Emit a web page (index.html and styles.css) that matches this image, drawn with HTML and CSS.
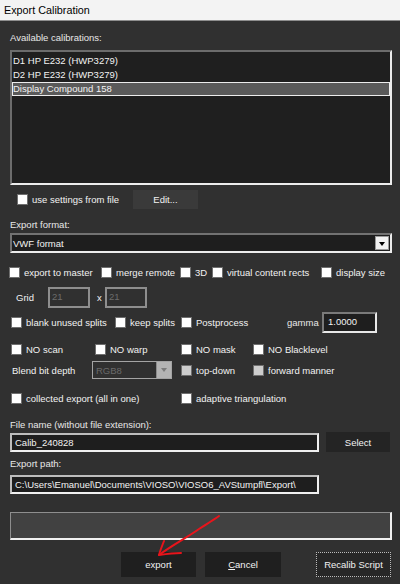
FILE: index.html
```html
<!DOCTYPE html>
<html>
<head>
<meta charset="utf-8">
<link rel="stylesheet" href="styles.css">
</head>
<body>
<div class="titlebar">Export Calibration</div>
<div class="content">
  <div class="label l-avail">Available calibrations:</div>
  <div class="listbox">
    <div class="item">D1 HP E232 (HWP3279)</div>
    <div class="item">D2 HP E232 (HWP3279)</div>
    <div class="item sel">Display Compound 158</div>
  </div>

  <div class="row r-use">
    <div class="chk c-use"><span class="box"></span>use settings from file</div>
    <div class="btn btn-edit">Edit...</div>
  </div>

  <div class="label l-format">Export format:</div>
  <div class="combo">
    <span class="combo-text">VWF format</span>
    <span class="drop"><span class="tri"></span></span>
  </div>

  <div class="row r-a">
    <div class="chk w92"><span class="box"></span>export to master</div>
    <div class="chk w79"><span class="box"></span>merge remote</div>
    <div class="chk w32"><span class="box"></span>3D</div>
    <div class="chk w109"><span class="box"></span>virtual content rects</div>
    <div class="chk"><span class="box"></span>display size</div>
  </div>

  <div class="row r-grid">
    <div class="grid-lbl">Grid</div>
    <div class="gin">21</div>
    <div class="x-lbl">x</div>
    <div class="gin">21</div>
  </div>

  <div class="row r-blank">
    <div class="chk w104"><span class="box"></span>blank unused splits</div>
    <div class="chk w66"><span class="box"></span>keep splits</div>
    <div class="chk w106"><span class="box"></span>Postprocess</div>
    <div class="gamma-lbl">gamma</div>
    <div class="gamma-in">1.0000</div>
  </div>

  <div class="row r-no">
    <div class="chk w84"><span class="box"></span>NO scan</div>
    <div class="chk w86"><span class="box"></span>NO warp</div>
    <div class="chk w72"><span class="box"></span>NO mask</div>
    <div class="chk"><span class="box"></span>NO Blacklevel</div>
  </div>

  <div class="row r-blend">
    <div class="blend-lbl">Blend bit depth</div>
    <div class="dcombo">
      <span class="dcombo-text">RGB8</span>
      <span class="ddrop"><span class="dtri"></span></span>
    </div>
    <div class="chk w72"><span class="box dis"></span>top-down</div>
    <div class="chk"><span class="box dis"></span>forward manner</div>
  </div>

  <div class="row r-coll">
    <div class="chk w170"><span class="box"></span>collected export (all in one)</div>
    <div class="chk"><span class="box"></span>adaptive triangulation</div>
  </div>

  <div class="label l-file">File name (without file extension):</div>
  <div class="row r-file">
    <div class="tin">Calib_240828</div>
    <div class="btn btn-select">Select</div>
  </div>

  <div class="label l-path">Export path:</div>
  <div class="row r-path">
    <div class="tin">C:\Users\Emanuel\Documents\VIOSO\VIOSO6_AVStumpfl\Export\</div>
  </div>

  <div class="progress"></div>

  <div class="row r-btns">
    <div class="btn btn-export">export</div>
    <div class="btn btn-cancel"><u>C</u>ancel</div>
    <div class="btn btn-recalib">Recalib Script</div>
  </div>
</div>

<svg class="arrow" width="400" height="584" viewBox="0 0 400 584">
  <path d="M219 516 C212 521 205 525 199 529 C188 537 172 545 159 555" fill="none" stroke="#e8141b" stroke-width="2" stroke-linecap="round" stroke-linejoin="round"/>
  <path d="M164 541 C162 546 160 551 159 555 C166 554 173 553 181 553" fill="none" stroke="#e8141b" stroke-width="2" stroke-linecap="round" stroke-linejoin="round"/>
</svg>
</body>
</html>
```
FILE: styles.css
```css
html, body {
  margin: 0;
  padding: 0;
}
body {
  width: 400px;
  height: 584px;
  overflow: hidden;
  position: relative;
  background: #303030;
  font-family: "Liberation Sans", Arial, sans-serif;
  font-size: 9.5px;
  color: #f2f2f2;
}
.titlebar {
  height: 20px;
  line-height: 20px;
  background: #f3f3f3;
  border-bottom: 1px solid #8e8e8e;
  color: #000;
  font-size: 10.8px;
  padding-left: 4px;
}
.content {
  padding-left: 10px;
}
.label {
  height: 14px;
  line-height: 14px;
  color: #e8e8e8;
  white-space: nowrap;
}
.l-avail { margin-top: 10px; }
.l-format { margin-top: 7px; }
.l-file { margin-top: 10px; }
.l-path { margin-top: 5px; }

.listbox {
  margin-top: 5px;
  width: 382px;
  height: 135px;
  box-sizing: border-box;
  background: #1f1f1f;
  border-style: solid;
  border-width: 2px 2px 2px 2px;
  border-color: #6c6c6c #ececec #ececec #6c6c6c;
  padding-top: 2px;
}
.item {
  height: 14px;
  line-height: 14px;
  padding-left: 1px;
  white-space: nowrap;
  box-sizing: border-box;
}
.item.sel {
  background: #5a5a5a;
  border: 1px solid #ececec;
  line-height: 12px;
  padding-left: 0;
}

.row {
  display: flex;
  align-items: center;
  white-space: nowrap;
}
.chk {
  display: flex;
  align-items: center;
  flex: none;
}
.box {
  width: 11px;
  height: 11px;
  box-sizing: border-box;
  border: 1px solid #6f6f6f;
  background: #ffffff;
  margin-right: 4px;
  flex: none;
}
.box.dis {
  background: #cdcdcd;
}
.btn {
  display: flex;
  align-items: center;
  justify-content: center;
  box-sizing: border-box;
  flex: none;
}

.r-use { margin-top: 2px; height: 24px; }
.c-use { margin-left: 7px; width: 116px; }
.btn-edit {
  width: 65px;
  height: 19px;
  background: #3a3a3a;
}

.combo {
  margin-top: 1px;
  width: 382px;
  height: 20px;
  box-sizing: border-box;
  background: #1e1e1e;
  border-style: solid;
  border-width: 2px;
  border-color: #727272 #ececec #ececec #727272;
  display: flex;
  align-items: center;
  justify-content: space-between;
}
.combo-text { padding-left: 1px; }
.drop {
  width: 14px;
  height: 14px;
  box-sizing: border-box;
  background: #f2f2f2;
  border: 1px solid #9a9a9a;
  display: flex;
  align-items: center;
  justify-content: center;
  margin-right: 1px;
}
.tri {
  width: 0;
  height: 0;
  border-left: 3.5px solid transparent;
  border-right: 3.5px solid transparent;
  border-top: 4px solid #000;
  margin-top: 1px;
}

.r-a { margin-top: 10px; height: 19px; margin-left: -1px; }
.w92 { width: 92px; }
.w79 { width: 79px; }
.w32 { width: 32px; }
.w109 { width: 109px; }
.w104 { width: 104px; }
.w66 { width: 66px; }
.w106 { width: 106px; }
.w84 { width: 84px; }
.w86 { width: 86px; }
.w72 { width: 72px; }
.w170 { width: 170px; }

.r-grid { margin-top: 5px; height: 21px; }
.grid-lbl { margin-left: 6px; width: 32px; }
.gin {
  width: 42px;
  height: 21px;
  box-sizing: border-box;
  border: 2px solid #8e8e8e;
  color: #6c6c6c;
  padding-left: 2px;
  line-height: 16px;
  font-size: 9.5px;
}
.x-lbl { width: 8px; padding-left: 7px; }

.r-blank { margin-top: 4px; height: 21px; margin-left: 1px; }
.gamma-lbl { width: 35px; color: #e8e8e8; }
.gamma-in {
  width: 55px;
  height: 21px;
  box-sizing: border-box;
  background: #1e1e1e;
  border-style: solid;
  border-width: 2px;
  border-color: #7a7a7a #e8e8e8 #e8e8e8 #7a7a7a;
  padding-left: 4px;
  line-height: 16px;
}

.r-no { margin-top: 7px; height: 19px; margin-left: 1px; }

.r-blend { margin-top: 2px; height: 18px; }
.blend-lbl { margin-left: 2px; width: 80px; }
.dcombo {
  width: 80px;
  height: 18px;
  box-sizing: border-box;
  border: 1px solid #a4a4a4;
  margin-right: 9px;
  display: flex;
  align-items: center;
  justify-content: space-between;
}
.dcombo-text { color: #6a6a6a; padding-left: 3px; }
.ddrop {
  width: 15px;
  height: 16px;
  box-sizing: border-box;
  background: #b4b4b4;
  border-left: 1px solid #8c8c8c;
  display: flex;
  align-items: center;
  justify-content: center;
}
.dtri {
  width: 0;
  height: 0;
  border-left: 3.5px solid transparent;
  border-right: 3.5px solid transparent;
  border-top: 4px solid #7c7c7c;
}

.r-coll { margin-top: 10px; height: 19px; margin-left: 1px; }

.r-file { height: 20px; align-items: flex-start; }
.tin {
  width: 309px;
  height: 19px;
  box-sizing: border-box;
  background: #1e1e1e;
  border-style: solid;
  border-width: 2px;
  border-color: #bdbdbd #f0f0f0 #f0f0f0 #bdbdbd;
  padding-left: 3px;
  line-height: 15px;
  overflow: hidden;
  flex: none;
}
.r-file .tin { margin-top: 1px; }
.btn-select {
  margin-left: 7px;
  width: 64px;
  height: 20px;
  background: #242424;
}
.r-path { margin-top: 4px; height: 19px; }

.progress {
  margin-top: 18px;
  width: 382px;
  height: 28px;
  box-sizing: border-box;
  background: #414141;
  border-style: solid;
  border-width: 1px 2px 2px 1px;
  border-color: #8e8e8e #f0f0f0 #f0f0f0 #8e8e8e;
}

.r-btns { margin-top: 12px; height: 25px; }
.btn-export {
  margin-left: 111px;
  width: 75px;
  height: 25px;
  background: #1f1f1f;
}
.btn-cancel {
  margin-left: 9px;
  width: 76px;
  height: 25px;
  background: #1f1f1f;
}
.btn-recalib {
  margin-left: 35px;
  width: 75px;
  height: 25px;
  background: #272727;
  border: 1px dotted #bcbcbc;
}

.arrow {
  position: absolute;
  left: 0;
  top: 0;
  pointer-events: none;
}
```
